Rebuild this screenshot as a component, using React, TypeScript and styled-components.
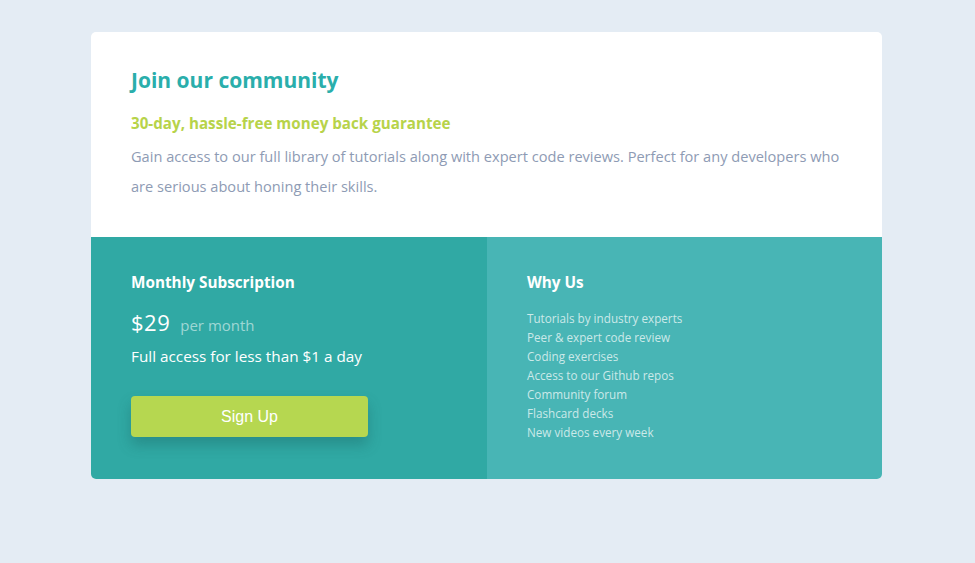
import React from "react";
import styled, { createGlobalStyle } from "styled-components";

const Global = createGlobalStyle`
  html, body { margin: 0; padding: 0; }
  body {
    background: #e4ecf4;
    font-family: "Open Sans", "Noto Sans", sans-serif;
    -webkit-font-smoothing: antialiased;
  }
  * { box-sizing: border-box; }
`;

const Page = styled.main`
  padding: 32px 2px 32px 0;
  display: flex;
  justify-content: center;
`;

const Card = styled.section`
  width: 791px;
  border-radius: 5px;
  overflow: hidden;
  background: #fff;
`;

const Top = styled.div`
  padding: 35px 40px 35px;
`;

const Title = styled.h1`
  margin: 0 0 20px;
  font-size: 21px;
  line-height: 26px;
  font-weight: 700;
  color: #2aaeab;
`;

const Guarantee = styled.h2`
  margin: 0 0 8px;
  font-size: 15.2px;
  line-height: 20px;
  font-weight: 700;
  color: #b7d34a;
`;

const Body = styled.p`
  margin: 0 0 1px;
  font-size: 14.6px;
  line-height: 30px;
  color: #8e9bb4;
`;

const Bottom = styled.div`
  display: grid;
  grid-template-columns: 396px 1fr;
  height: 242px;
`;

const Panel = styled.div<{ $tone: string }>`
  background: ${(p) => p.$tone};
  padding: 35px 40px 40px;
  color: #fff;
`;

const PanelTitle = styled.h3`
  margin: 0 0 17px;
  font-size: 15.3px;
  line-height: 20px;
  font-weight: 700;
`;

const PriceRow = styled.div`
  display: flex;
  align-items: baseline;
  gap: 10px;
  margin: 2px 0 11px;
`;

const Price = styled.span`
  font-size: 22px;
  line-height: 26px;
  letter-spacing: 0.5px;
`;

const Per = styled.span`
  font-size: 15px;
  color: rgba(255, 255, 255, 0.55);
`;

const Note = styled.p`
  margin: 0 0 30px;
  font-size: 15.3px;
  line-height: 20px;
`;

const Button = styled.button`
  display: block;
  width: 237px;
  height: 41px;
  border: none;
  border-radius: 4px;
  background: #b6d750;
  color: #fff;
  font-family: "Liberation Sans", Arial, sans-serif;
  font-size: 16px;
  box-shadow: 0 8px 14px rgba(20, 80, 80, 0.3);
  cursor: pointer;
`;

const List = styled.ul`
  list-style: none;
  margin: 0;
  padding: 0;
  display: flex;
  flex-direction: column;
`;

const Item = styled.li`
  font-size: 11.7px;
  line-height: 19px;
  color: rgba(255, 255, 255, 0.72);
`;

const features = [
  "Tutorials by industry experts",
  "Peer & expert code review",
  "Coding exercises",
  "Access to our Github repos",
  "Community forum",
  "Flashcard decks",
  "New videos every week",
];

export default function App() {
  return (
    <>
      <Global />
      <Page>
        <Card>
          <Top>
            <Title>Join our community</Title>
            <Guarantee>30-day, hassle-free money back guarantee</Guarantee>
            <Body>
              Gain access to our full library of tutorials along with expert code reviews. Perfect for any
              developers who are serious about honing their skills.
            </Body>
          </Top>
          <Bottom>
            <Panel $tone="#30a9a4">
              <PanelTitle>Monthly Subscription</PanelTitle>
              <PriceRow>
                <Price>$29</Price>
                <Per>per month</Per>
              </PriceRow>
              <Note>Full access for less than $1 a day</Note>
              <Button>Sign Up</Button>
            </Panel>
            <Panel $tone="#48b5b5">
              <PanelTitle>Why Us</PanelTitle>
              <List>
                {features.map((f) => (
                  <Item key={f}>{f}</Item>
                ))}
              </List>
            </Panel>
          </Bottom>
        </Card>
      </Page>
    </>
  );
}
